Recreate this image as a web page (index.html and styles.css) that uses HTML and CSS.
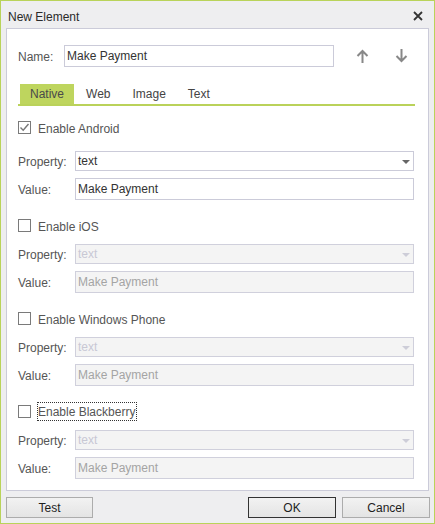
FILE: index.html
```html
<!DOCTYPE html>
<html>
<head>
<meta charset="utf-8">
<link rel="stylesheet" href="styles.css">
</head>
<body>
<div class="dialog">
  <div class="titlebar">
    <span class="title">New Element</span>
    <svg class="close" width="10" height="10" viewBox="0 0 10 10"><path d="M1 1L9 9M9 1L1 9" stroke="#333" stroke-width="1.8" fill="none"/></svg>
  </div>
  <div class="panel">
    <div class="name-row">
      <span class="name-label">Name:</span>
      <div class="field name-field">Make Payment</div>
      <svg class="arrow up" width="13" height="14" viewBox="0 0 13 14"><path d="M6.5 14V2M1.5 7L6.5 2L11.5 7" stroke="#888" stroke-width="2" fill="none"/></svg>
      <svg class="arrow down" width="13" height="14" viewBox="0 0 13 14"><path d="M6.5 0V12M1.5 7L6.5 12L11.5 7" stroke="#888" stroke-width="2" fill="none"/></svg>
    </div>
    <div class="tabs">
      <span class="tab active">Native</span>
      <span class="tab">Web</span>
      <span class="tab">Image</span>
      <span class="tab">Text</span>
    </div>

    <div class="section first">
      <div class="check-row">
        <span class="checkbox"><svg width="11" height="11" viewBox="0 0 11 11"><path d="M1.5 5.5L4.2 8.2L9.5 2" stroke="#777" stroke-width="1.4" fill="none"/></svg></span>
        <span class="check-label">Enable Android</span>
      </div>
      <div class="row prop-row">
        <span class="label">Property:</span>
        <div class="field select">text<span class="caret"></span></div>
      </div>
      <div class="row value-row">
        <span class="label">Value:</span>
        <div class="field value">Make Payment</div>
      </div>
    </div>

    <div class="section">
      <div class="check-row">
        <span class="checkbox"></span>
        <span class="check-label">Enable iOS</span>
      </div>
      <div class="row prop-row">
        <span class="label">Property:</span>
        <div class="field select disabled">text<span class="caret"></span></div>
      </div>
      <div class="row value-row">
        <span class="label">Value:</span>
        <div class="field value disabled">Make Payment</div>
      </div>
    </div>

    <div class="section">
      <div class="check-row">
        <span class="checkbox"></span>
        <span class="check-label">Enable Windows Phone</span>
      </div>
      <div class="row prop-row">
        <span class="label">Property:</span>
        <div class="field select disabled">text<span class="caret"></span></div>
      </div>
      <div class="row value-row">
        <span class="label">Value:</span>
        <div class="field value disabled">Make Payment</div>
      </div>
    </div>

    <div class="section">
      <div class="check-row">
        <span class="checkbox"></span>
        <span class="check-label focused">Enable Blackberry</span>
      </div>
      <div class="row prop-row">
        <span class="label">Property:</span>
        <div class="field select disabled">text<span class="caret"></span></div>
      </div>
      <div class="row value-row">
        <span class="label">Value:</span>
        <div class="field value disabled">Make Payment</div>
      </div>
    </div>
  </div>
  <div class="buttons">
    <div class="btn test">Test</div>
    <div class="btn-group">
      <div class="btn default">OK</div>
      <div class="btn">Cancel</div>
    </div>
  </div>
</div>
</body>
</html>
```
FILE: styles.css
```css
html, body {
  margin: 0;
  padding: 0;
}
body {
  font-family: "Liberation Sans", Arial, sans-serif;
  font-size: 12px;
  color: #333;
}
.dialog {
  width: 435px;
  height: 524px;
  box-sizing: border-box;
  border: 1px solid #b9d35a;
  background: #eeeef0;
  display: flex;
  flex-direction: column;
}
.titlebar {
  height: 27px;
  box-sizing: border-box;
  padding: 2px 11px 0 7px;
  display: flex;
  align-items: center;
  justify-content: space-between;
}
.title {
  color: #2a2a2a;
  padding-top: 2px;
}
.close {
  display: block;
}
.panel {
  margin-left: 5px;
  width: 423px;
  height: 463px;
  box-sizing: border-box;
  border: 1px solid #cbcbd9;
  background: #fff;
  padding: 0 13px 0 11px;
}
.name-row {
  margin-top: 16px;
  height: 22px;
  display: flex;
  align-items: center;
}
.name-label {
  width: 46px;
  color: #555;
  padding-top: 2px;
}
.field {
  box-sizing: border-box;
  border: 1px solid #cbcbd9;
  padding-left: 2px;
  color: #333;
  background: #fff;
  position: relative;
}
.name-field {
  width: 270px;
  height: 22px;
  line-height: 19px;
  padding-top: 1px;
}
.arrow {
  display: block;
}
.arrow.up {
  margin-left: 22px;
}
.arrow.down {
  margin-left: 26px;
}
.tabs {
  margin-top: 17px;
  height: 20px;
  padding-left: 2px;
  display: flex;
  gap: 2px;
  border-bottom: 2px solid #bad25a;
}
.tab {
  padding: 1px 10px 0;
  line-height: 19px;
  color: #444;
}
.tab.active {
  background: #bed55e;
  color: #4a4a4a;
}
.section {
  margin-top: 19px;
}
.section.first {
  margin-top: 15px;
}
.check-row {
  height: 13px;
  display: flex;
  align-items: center;
}
.checkbox {
  width: 13px;
  height: 13px;
  box-sizing: border-box;
  border: 1px solid #7a7a7a;
  background: #fff;
  display: flex;
  align-items: center;
  justify-content: center;
}
.checkbox svg {
  display: block;
}
.check-label {
  margin-left: 7px;
  color: #555;
  padding-top: 2px;
}
.check-label.focused {
  margin-left: 6px;
  border: 1px dotted #333;
  padding: 2px 1px 1px 0;
  line-height: 14px;
}
.row {
  display: flex;
  align-items: center;
}
.prop-row {
  margin-top: 12px;
  height: 20px;
}
.section.first .prop-row {
  margin-top: 17px;
}
.value-row {
  margin-top: 7px;
  height: 22px;
}
.label {
  width: 57px;
  color: #555;
  padding-top: 2px;
}
.select {
  width: 339px;
  height: 20px;
  line-height: 17px;
  padding-top: 1px;
}
.value {
  width: 339px;
  height: 22px;
  line-height: 19px;
  padding-top: 1px;
}
.caret {
  position: absolute;
  right: 3px;
  top: 8px;
  width: 0;
  height: 0;
  border-left: 4px solid transparent;
  border-right: 4px solid transparent;
  border-top: 4px solid #666;
}
.field.disabled {
  background: #f4f4f4;
  border-color: #d0d0dc;
  color: #a4a4a4;
}
.select.disabled {
  color: #c8c8d4;
}
.select.disabled .caret {
  border-top-color: #cdcdd8;
}
.buttons {
  margin-top: 6px;
  padding: 0 4px 0 5px;
  display: flex;
  justify-content: space-between;
}
.btn-group {
  display: flex;
  gap: 6px;
}
.btn {
  width: 88px;
  height: 21px;
  box-sizing: border-box;
  border: 1px solid #acacac;
  background: linear-gradient(#f2f2f2, #e4e4e4);
  color: #1e1e1e;
  text-align: center;
  line-height: 18px;
  padding-top: 1px;
}
.btn.test {
  width: 87px;
}
.btn.default {
  border-color: #333;
}
```
